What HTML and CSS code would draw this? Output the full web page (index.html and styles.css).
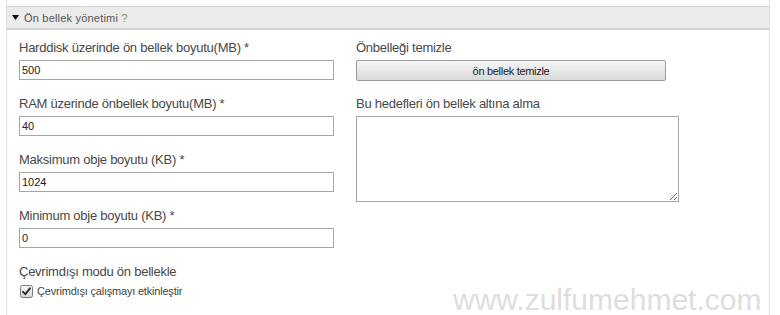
FILE: index.html
```html
<!DOCTYPE html>
<html lang="tr">
<head>
<meta charset="utf-8">
<title>Ön bellek yönetimi</title>
<link rel="stylesheet" href="styles.css">
</head>
<body>
<div class="panel">
  <div class="header">
    <svg class="caret" width="7" height="5" viewBox="0 0 7 5"><polygon points="0,0 7,0 3.5,5" fill="#111"/></svg>
    <span class="title">Ön bellek yönetimi <span class="help">?</span></span>
  </div>
  <div class="content">
    <div class="col">
      <div class="field">
        <label class="lbl">Harddisk üzerinde ön bellek boyutu(MB) *</label>
        <input class="txt" type="text" value="500">
      </div>
      <div class="field">
        <label class="lbl">RAM üzerinde önbellek boyutu(MB) *</label>
        <input class="txt" type="text" value="40">
      </div>
      <div class="field">
        <label class="lbl">Maksimum obje boyutu (KB) *</label>
        <input class="txt" type="text" value="1024">
      </div>
      <div class="field">
        <label class="lbl">Minimum obje boyutu (KB) *</label>
        <input class="txt" type="text" value="0">
      </div>
      <div class="field last">
        <label class="lbl">Çevrimdışı modu ön bellekle</label>
        <div class="check-row">
          <svg class="cb" width="13" height="13" viewBox="0 0 13 13">
            <defs><linearGradient id="g" x1="0" y1="0" x2="0" y2="1"><stop offset="0" stop-color="#fafafa"/><stop offset="1" stop-color="#d6d6d6"/></linearGradient></defs>
            <rect x="0.5" y="0.5" width="12" height="12" rx="2" fill="url(#g)" stroke="#7c7c7c"/>
            <path d="M3 6.8 L5.3 9.2 L10 3.3" fill="none" stroke="#2a2a2a" stroke-width="1.9" stroke-linecap="round" stroke-linejoin="round"/>
          </svg>
          <span class="check-text">Çevrimdışı çalışmayı etkinleştir</span>
        </div>
      </div>
    </div>
    <div class="col">
      <div class="field">
        <label class="lbl">Önbelleği temizle</label>
        <button class="btn" type="button">ön bellek temizle</button>
      </div>
      <div class="field">
        <label class="lbl">Bu hedefleri ön bellek altına alma</label>
        <textarea class="area"></textarea>
      </div>
    </div>
  </div>
  <div class="watermark">www.zulfumehmet.com</div>
</div>
</body>
</html>
```

FILE: styles.css
```css
html, body {
  margin: 0;
  padding: 0;
  background: #fff;
  overflow: hidden;
}
body {
  font-family: "Liberation Sans", Arial, sans-serif;
  width: 780px;
  height: 315px;
}
.panel {
  position: relative;
  margin-left: 6px;
  width: 764px;
  height: 315px;
  border-left: 1px solid #dedede;
  border-right: 1px solid #dedede;
  padding-top: 6px;
  box-sizing: border-box;
}
.header {
  height: 21px;
  background: #ebebeb;
  border-top: 1px solid #d2d2d2;
  border-bottom: 2px solid #d2d2d2;
  display: flex;
  align-items: center;
  padding-left: 5px;
  gap: 5px;
  font-size: 11px;
  letter-spacing: 0.2px;
  color: #555;
}
.caret { display: block; }
.help { color: #8c9a5c; }
.content {
  display: grid;
  grid-template-columns: 315px 323px;
  column-gap: 22px;
  padding: 10px 0 0 12px;
}
.col {
  display: flex;
  flex-direction: column;
}
.field {
  display: flex;
  flex-direction: column;
  align-items: flex-start;
  margin-bottom: 16px;
}
.lbl {
  font-size: 13px;
  line-height: 16px;
  letter-spacing: -0.25px;
  color: #484848;
  margin-bottom: 4px;
}
.txt {
  width: 315px;
  height: 20px;
  box-sizing: border-box;
  border: 1px solid #a6a6a6;
  border-radius: 0;
  padding: 0 2px;
  margin: 0;
  font-family: "Liberation Sans", Arial, sans-serif;
  font-size: 11px;
  color: #222;
  background: #fff;
  outline: none;
}
.btn {
  width: 310px;
  height: 21px;
  box-sizing: border-box;
  margin: 0 0 -1px 0;
  padding: 0;
  border: 1px solid #9c9c9c;
  border-radius: 2px;
  background: linear-gradient(#f7f7f7, #e4e4e4 60%, #dadada);
  font-family: "Liberation Sans", Arial, sans-serif;
  font-size: 11px;
  letter-spacing: -0.3px;
  color: #222;
}
.area {
  width: 323px;
  height: 86px;
  box-sizing: border-box;
  border: 1px solid #a6a6a6;
  border-radius: 0;
  margin: 0;
  padding: 2px;
  resize: both;
  background: #fff;
  outline: none;
}
.last .lbl { margin-bottom: 3px; }
.check-row {
  display: flex;
  align-items: center;
  height: 16px;
  padding-left: 1px;
  gap: 4px;
}
.cb { display: block; }
.check-text {
  font-size: 11px;
  letter-spacing: -0.2px;
  color: #444;
}
.watermark {
  position: absolute;
  left: 446px;
  top: 285px;
  font-family: "Liberation Sans", Arial, sans-serif;
  font-size: 30px;
  line-height: 30px;
  letter-spacing: 0;
  color: #dedede;
  white-space: nowrap;
}
```
